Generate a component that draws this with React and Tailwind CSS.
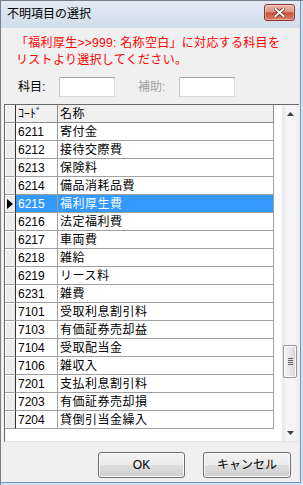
import React from 'react';

const rows = [
  ['6211', '寄付金'],
  ['6212', '接待交際費'],
  ['6213', '保険料'],
  ['6214', '備品消耗品費'],
  ['6215', '福利厚生費'],
  ['6216', '法定福利費'],
  ['6217', '車両費'],
  ['6218', '雑給'],
  ['6219', 'リース料'],
  ['6231', '雑費'],
  ['7101', '受取利息割引料'],
  ['7103', '有価証券売却益'],
  ['7104', '受取配当金'],
  ['7106', '雑収入'],
  ['7201', '支払利息割引料'],
  ['7203', '有価証券売却損'],
  ['7204', '貸倒引当金繰入'],
];

const SELECTED = '6215';

const btn =
  'h-[26px] rounded-[3px] border border-[#707070] bg-[linear-gradient(to_bottom,#f2f2f2_0%,#ebebeb_50%,#dddddd_51%,#cfcfcf_100%)] shadow-[inset_0_0_0_1px_#fafafa] text-[12px] text-black leading-none';

function GridRow({ code, name }) {
  const sel = code === SELECTED;
  return (
    <div className="flex h-[18px]">
      <div className="w-[11px] bg-[#ececec] border-r border-b border-r-[#303030] border-b-[#a0a0a0] shadow-[inset_1px_1px_0_#ffffff] flex items-center justify-center">
        {sel && (
          <svg width="6" height="10" viewBox="0 0 6 10">
            <path d="M0 0 L6 5 L0 10 Z" fill="#000" />
          </svg>
        )}
      </div>
      <div className={`w-[42px] border-r border-b border-[#a0a0a0] pl-[2px] flex items-center ${sel ? 'bg-[#3399ff] text-white' : ''}`}>
        {code}
      </div>
      <div className={`w-[216px] border-r border-b border-[#a0a0a0] pl-[2px] flex items-center tracking-[0.5px] ${sel ? 'bg-[#3399ff] text-white' : ''}`}>
        {name}
      </div>
      <div className="flex-1" />
    </div>
  );
}

export default function App() {
  return (
    <div className="w-[303px] h-[485px] bg-[#d5e0ee] border-l border-t border-[#73808f] pr-[2px] pb-[2px] flex flex-col text-[12px] text-black [font-family:'Liberation_Sans','Noto_Sans_CJK_JP',sans-serif]">
      <div className="flex-1 flex flex-col border-r border-b border-[#7097c6]">
        {/* title bar */}
        <div className="h-[27px] flex items-start justify-between bg-[linear-gradient(to_bottom,#e0e9f4,#d2ddeb)]">
          <span className="pl-[6px] leading-[27px] whitespace-nowrap">不明項目の選択</span>
          <button className="mt-[3px] mr-[5px] w-[31px] h-[17px] rounded-[3px] border border-[#8a372b] bg-[linear-gradient(to_bottom,#ecb7ab_0%,#de9484_45%,#c8513b_52%,#d9806c_100%)] shadow-[inset_0_0_0_1px_rgba(255,255,255,0.35)] flex items-center justify-center">
            <svg width="11" height="9" viewBox="0 0 11 9">
              <path d="M1.5 1 L9.5 8 M9.5 1 L1.5 8" stroke="#6a2418" strokeWidth="3.6" strokeLinecap="square" />
              <path d="M1.5 1 L9.5 8 M9.5 1 L1.5 8" stroke="#ffffff" strokeWidth="2" strokeLinecap="square" />
            </svg>
          </button>
        </div>

        {/* client area */}
        <div className="flex-1 bg-[#f0f0f0] flex flex-col">
          <div className="pl-[15px] pt-[7px] text-[#ff0000] leading-[17px] tracking-[0.3px] whitespace-nowrap">
            「福利厚生&gt;&gt;999: 名称空白」に対応する科目を
            <br />
            リストより選択してください。
          </div>

          <div className="mt-[8px] h-[20px] pl-[17px] flex items-center whitespace-nowrap">
            <span className="w-[41px]">科目:</span>
            <input
              readOnly
              className="w-[56px] h-[20px] bg-white border border-[#dcdcdc] border-t-[#a6a6a6] border-l-[#c4c4c4] outline-none"
            />
            <span className="ml-[23px] w-[41px] text-[#a0a0a0]">補助:</span>
            <input
              readOnly
              className="w-[56px] h-[20px] bg-white border border-[#dcdcdc] border-t-[#a6a6a6] border-l-[#c4c4c4] outline-none"
            />
          </div>

          {/* grid */}
          <div className="mt-[7px] ml-[3px] w-[295px] h-[338px] bg-white border-t border-l border-b border-t-[#696969] border-l-[#696969] border-b-[#e3e3e3] flex">
            <div className="flex-1 flex flex-col">
              <div className="flex h-[18px] bg-[#f0f0f0]">
                <div className="w-[11px] border-r border-b border-r-[#303030] border-b-[#8c8c8c] shadow-[inset_1px_1px_0_#ffffff]" />
                <div className="w-[42px] border-r border-b border-[#8c8c8c] pl-[2px] flex items-center">ｺｰﾄﾞ</div>
                <div className="w-[216px] border-r border-b border-[#8c8c8c] pl-[2px] flex items-center tracking-[0.5px]">名称</div>
                <div className="flex-1 bg-white" />
              </div>
              {rows.map(([c, n]) => (
                <GridRow key={c} code={c} name={n} />
              ))}
            </div>

            {/* scrollbar */}
            <div className="w-[17px] flex flex-col bg-[linear-gradient(to_right,#e6e6e6,#f5f5f5_25%,#f5f5f5_75%,#ececec)]">
              <div className="h-[17px] flex items-center justify-center">
                <svg width="7" height="4" viewBox="0 0 7 4">
                  <path d="M0 4 L3.5 0 L7 4 Z" fill="#404040" />
                </svg>
              </div>
              <div className="flex-1">
                <div className="mt-[223px] ml-[1px] w-[14px] h-[33px] rounded-[2px] border border-[#979797] bg-[linear-gradient(to_right,#f4f4f4,#e8e8e8_50%,#d6d6d6)] shadow-[inset_0_0_0_1px_#fbfbfb] flex flex-col items-center justify-center gap-[1px]">
                  <div className="w-[5px] h-[1px] bg-[#5c5c5c]" />
                  <div className="w-[5px] h-[1px] bg-[#5c5c5c]" />
                  <div className="w-[5px] h-[1px] bg-[#5c5c5c]" />
                  <div className="w-[5px] h-[1px] bg-[#5c5c5c]" />
                </div>
              </div>
              <div className="h-[17px] flex items-center justify-center">
                <svg width="7" height="4" viewBox="0 0 7 4">
                  <path d="M0 0 L3.5 4 L7 0 Z" fill="#404040" />
                </svg>
              </div>
            </div>
          </div>

          {/* buttons */}
          <div className="mt-[10px] pr-[9px] flex justify-end gap-[18px]">
            <button className={`${btn} w-[87px]`}>OK</button>
            <button className={`${btn} w-[88px]`}>キャンセル</button>
          </div>
        </div>
      </div>
    </div>
  );
}
